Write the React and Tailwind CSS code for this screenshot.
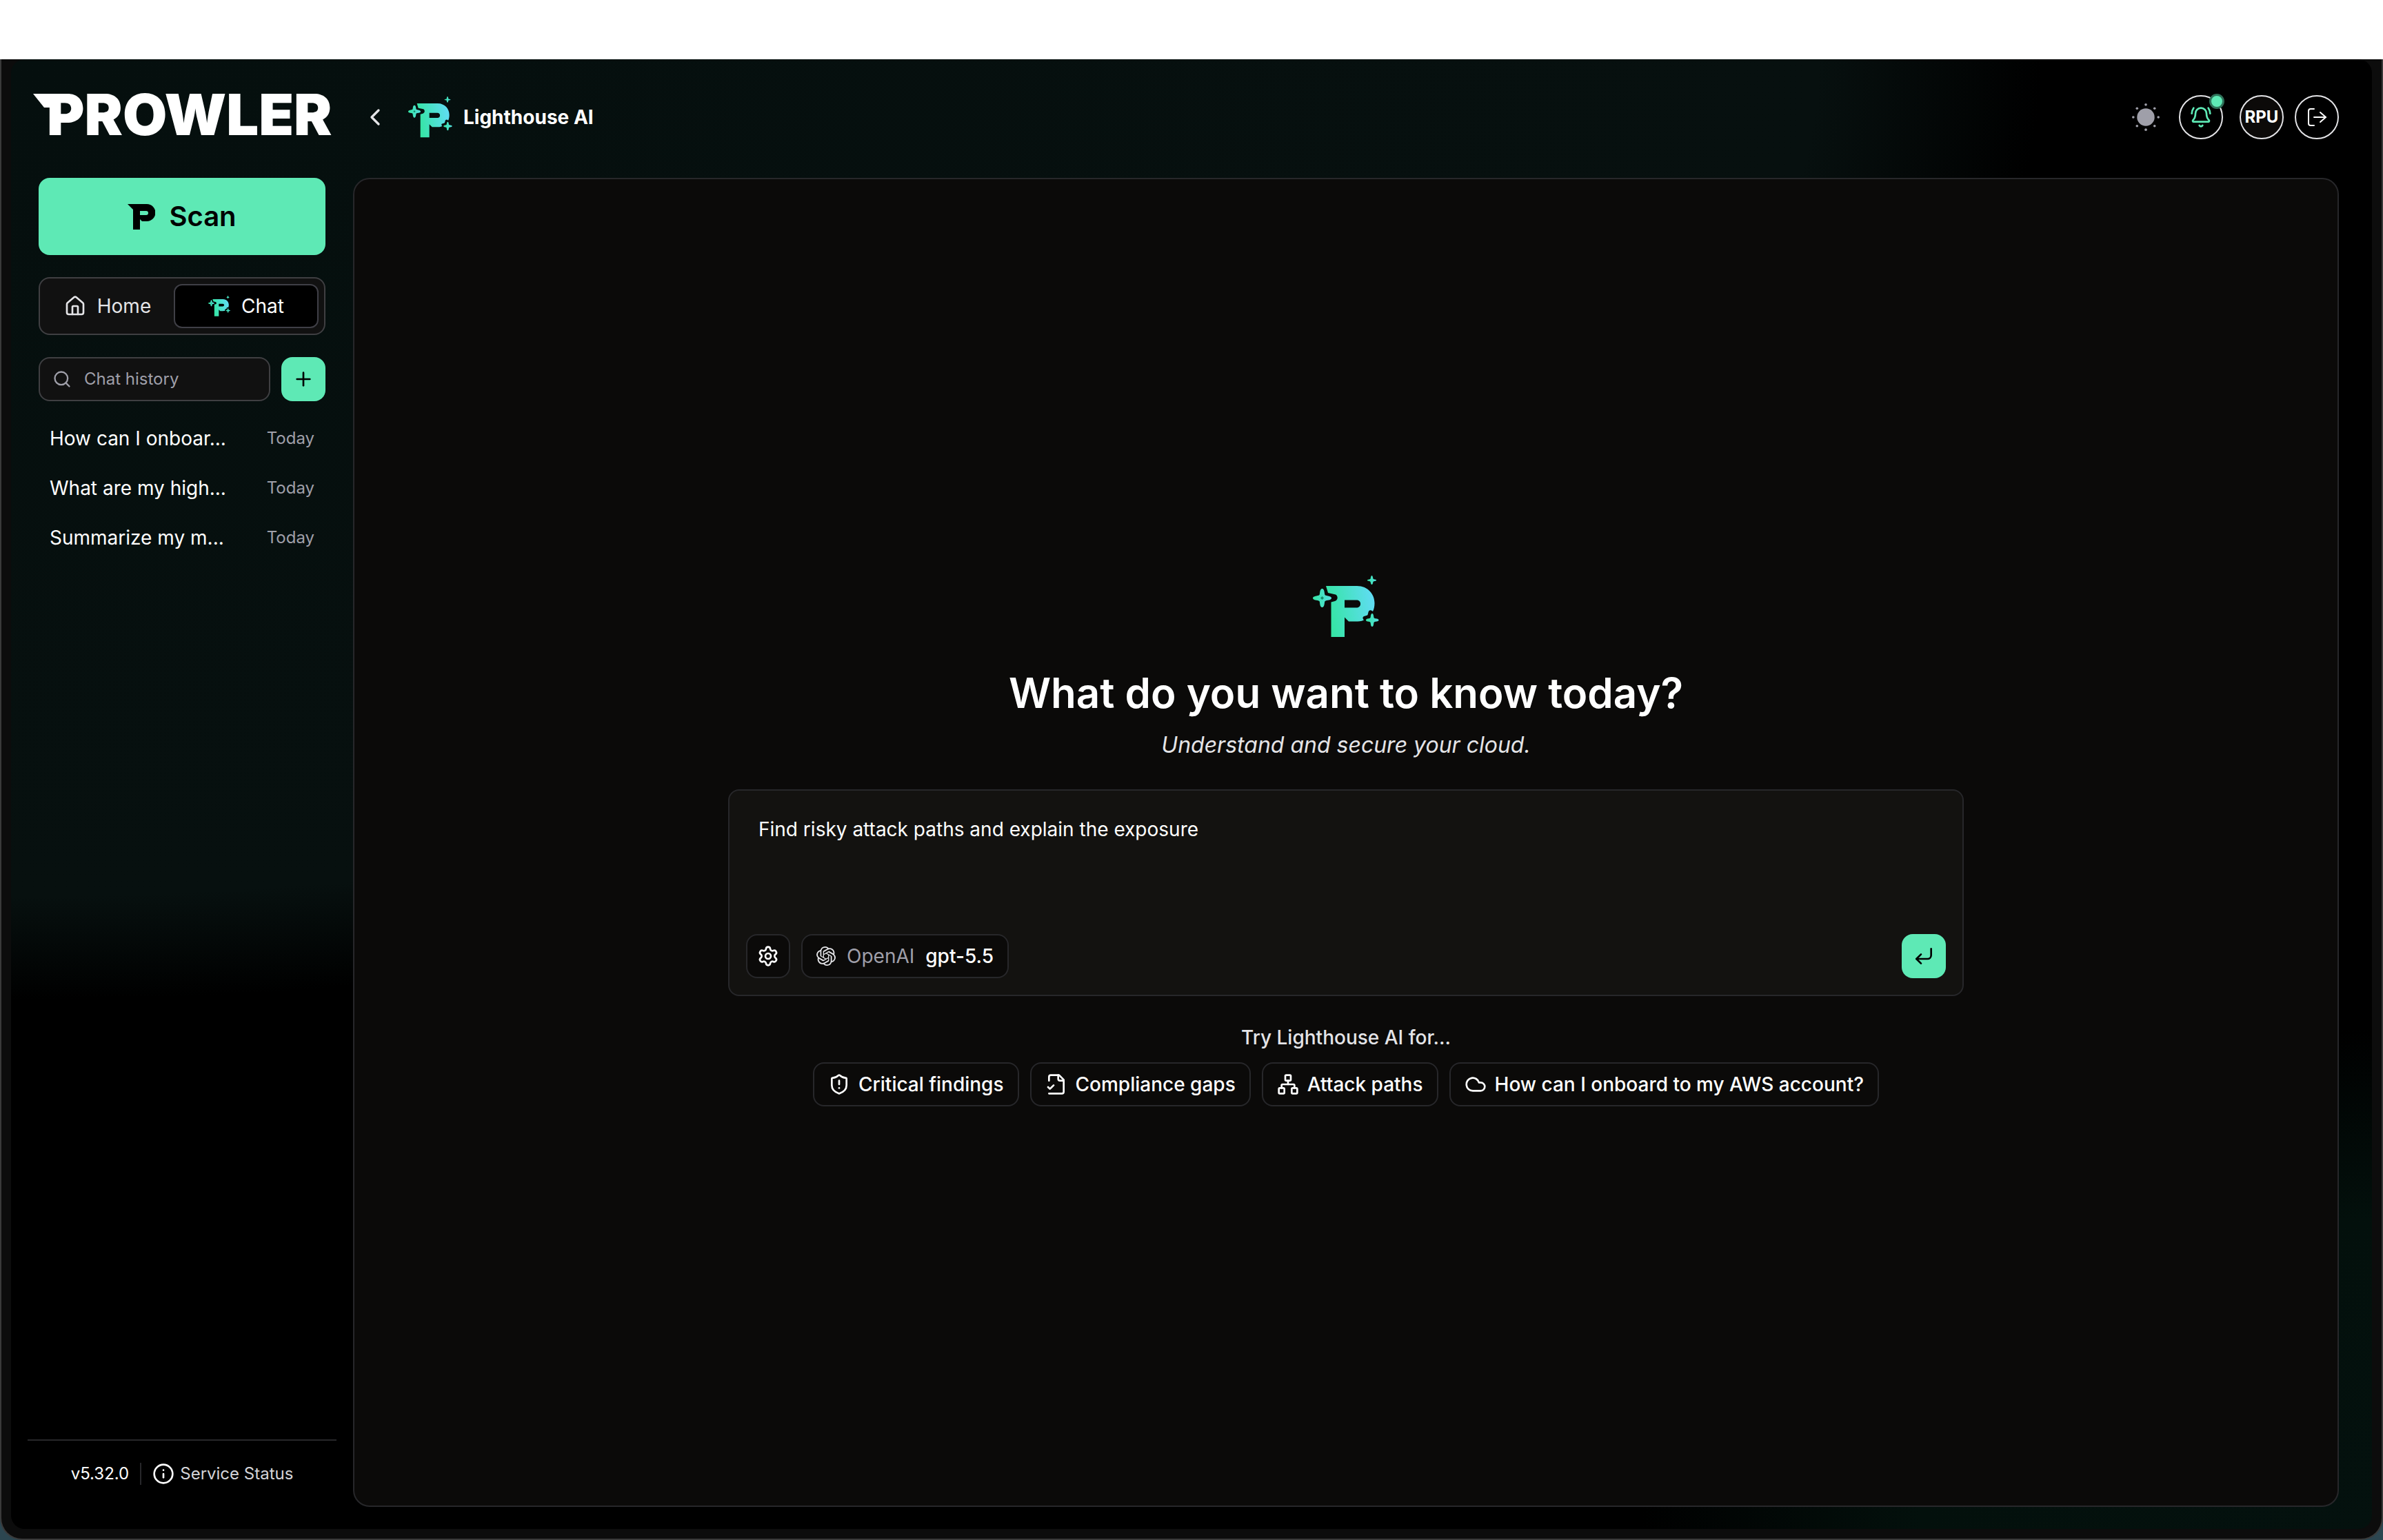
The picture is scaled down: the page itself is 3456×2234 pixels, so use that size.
import { useState } from "react";
import {
  BellRing,
  ChevronLeft,
  Cloud,
  CornerDownLeft,
  House,
  Info,
  Network,
  Plus,
  Search,
  Settings,
  ShieldAlert,
} from "lucide-react";
import { SiOpenai } from "react-icons/si";

const chats = [
  { id: 1, title: "How can I onboar...", date: "Today" },
  { id: 2, title: "What are my high...", date: "Today" },
  { id: 3, title: "Summarize my m...", date: "Today" },
];

const FileCheckIcon = ({ className }) => (
  <svg
    viewBox="0 0 24 24"
    fill="none"
    stroke="currentColor"
    strokeWidth="2"
    strokeLinecap="round"
    strokeLinejoin="round"
    className={className}
    aria-hidden="true"
  >
    <path d="M4 22h14a2 2 0 0 0 2-2V7l-5-5H6a2 2 0 0 0-2 2v4" />
    <path d="M14 2v4a2 2 0 0 0 2 2h4" />
    <path d="m3 15 2 2 4-4" />
  </svg>
);

const SignOutIcon = ({ className }) => (
  <svg
    viewBox="0 0 32 32"
    fill="none"
    stroke="currentColor"
    strokeWidth="2"
    strokeLinecap="round"
    strokeLinejoin="round"
    className={className}
    aria-hidden="true"
  >
    <path d="M12 4H7a3 3 0 0 0-3 3v18a3 3 0 0 0 3 3h5" />
    <path d="M12 16h17" />
    <path d="m21 9 8 7-8 7" />
  </svg>
);

const SunIcon = ({ className }) => (
  <svg viewBox="0 0 44 44" fill="currentColor" className={className} aria-hidden="true">
    <circle cx="22" cy="22" r="14" />
    <circle cx="22" cy="2" r="2" />
    <circle cx="22" cy="42" r="2" />
    <circle cx="2" cy="22" r="2" />
    <circle cx="42" cy="22" r="2" />
    <circle cx="8" cy="8" r="2" />
    <circle cx="36" cy="8" r="2" />
    <circle cx="8" cy="36" r="2" />
    <circle cx="36" cy="36" r="2" />
  </svg>
);

// Brand mark, plain version used on the scan button
const ProwlerMark = ({ className }) => (
  <svg viewBox="0 0 40 37" fill="currentColor" className={className} aria-hidden="true">
    <path
      fillRule="evenodd"
      d="M0 0h28a12.500 12.500 0 0 1 0 25h-7l-3-3v15H8V8Zm18 10v6h9a3 3 0 0 0 0-6Z"
    />
  </svg>
);

// Brand mark with sparkles
const LighthouseMark = ({ id, className }) => (
  <svg viewBox="0 0 96 90" className={className} aria-hidden="true">
    <defs>
      <linearGradient id={id} gradientUnits="userSpaceOnUse" x1="22" y1="50" x2="90" y2="38">
        <stop offset="0" stopColor="#35e5a4" />
        <stop offset="1" stopColor="#61dcf4" />
      </linearGradient>
      <linearGradient id={`${id}-star`} x1="0" y1="0" x2="1" y2="0">
        <stop offset="0" stopColor="#35e5a4" />
        <stop offset="1" stopColor="#55dfe0" />
      </linearGradient>
    </defs>
    <path
      fill={`url(#${id})`}
      fillRule="evenodd"
      d="M19 15H64C80 15 89.500 27 89.500 40C89.500 45 88.500 49 87 52C84 49 81 50 80.500 53L79.500 57C77 59 72 58 72.500 62C73 64 74 64 74 64.500C70 66.500 66 66.500 62 66.500H52L46 60.500V89H26.500V38.500L32 37C37 35.500 36.500 29 33 27.500L22 25ZM46 35.500V46.500H63.500C71 46.500 71 35.500 63.500 35.500Z"
    />
    <g fill={`url(#${id}-star)`}>
      <path d="M13.500 19C15.500 19 16.500 21 17 26C17 28 18 29 20 29C25 30 27 31 27 32.500C27 34.500 25 35.500 20 36C18 36.500 17 37 17 39C16.500 44 15.500 46 13.500 46C11.500 46 10.500 44 10 39C10 37 9 36.500 7 36C2 35.500 0 34.500 0 32.500C0 31 2 30 7 29C9 29 10 28 10 26C10.500 21 11.500 19 13.500 19Z" />
      <path d="M86 55C87.500 55 88 57 88.300 60C88.500 61.500 89 62 91 62.200C94 62.700 95.500 63 95.500 64.500C95.500 66 94 66.300 91 66.700C89 67 88.500 67.500 88.300 69C88 72 87.500 74 86 74C84.500 74 84 72 83.700 69C83.500 67.500 83 67 81 66.700C78 66.300 77 66 77 64.500C77 63 78 62.700 81 62.200C83 62 83.500 61.500 83.700 60C84 57 84.500 55 86 55Z" />
      <path d="M85.500 0C86.500 0 87 2 87.300 4C87.500 5 88 5.300 89.500 5.500C91.500 5.800 92 6 92 6.700C92 7.500 91.500 7.700 89.500 8C88 8.300 87.500 8.500 87.300 9.500C87 11.500 86.500 13 85.500 13C84.500 13 84 11.500 83.700 9.500C83.500 8.500 83 8.300 81.500 8C79.500 7.700 79 7.500 79 6.700C79 6 79.500 5.800 81.500 5.500C83 5.300 83.500 5 83.700 4C84 2 84.500 0 85.500 0Z" />
    </g>
    <path d="m13.500 30 2.500 2.500-2.500 2.500-2.500-2.500Z" fill="#178a68" />
  </svg>
);

const suggestions = [
  { label: "Critical findings", icon: ShieldAlert },
  { label: "Compliance gaps", icon: FileCheckIcon },
  { label: "Attack paths", icon: Network },
  { label: "How can I onboard to my AWS account?", icon: Cloud },
];

const Sidebar = () => {
  const [search, setSearch] = useState("");

  return (
    <aside className="flex w-[496px] shrink-0 flex-col">
      <div className="flex h-[172px] items-center px-8 pb-3">
        <a href="#home" className="flex items-center">
          <svg viewBox="0 0 24 60" className="-mr-1 h-[60px] w-6 text-white" aria-hidden="true">
            <path d="M0 0h24v20h-8Z" fill="currentColor" />
          </svg>
          <span className="text-[83px] leading-none font-black text-white">PROWLER</span>
        </a>
      </div>

      <div className="flex flex-1 flex-col px-10">
        <button
          type="button"
          className="flex h-28 items-center justify-center gap-5 rounded-2xl bg-emerald-300 text-[40px] font-semibold text-black"
        >
          <ProwlerMark className="h-[37px] w-10" />
          Scan
        </button>

        <nav className="mt-8 grid h-[84px] grid-cols-[6fr_7fr] gap-1.5 rounded-2xl border-2 border-[#3f3f42] bg-[#111111] p-2 text-[28px]">
          <a href="#home" className="flex items-center justify-center gap-4 text-zinc-200">
            <House className="size-8" />
            Home
          </a>
          <a
            href="#chat"
            className="flex items-center justify-center gap-4 rounded-xl border-2 border-[#3f3f46] bg-black text-white"
          >
            <LighthouseMark id="mark-tab" className="h-[30px] w-8" />
            Chat
          </a>
        </nav>

        <div className="mt-8 flex gap-4">
          <label className="flex h-16 min-w-0 flex-1 items-center gap-[18px] rounded-2xl border-2 border-[#3f3f42] bg-[#111111] px-[18px] text-zinc-400">
            <Search className="size-7 shrink-0" />
            <input
              type="text"
              aria-label="Chat history"
              placeholder="Chat history"
              value={search}
              onChange={(e) => setSearch(e.target.value)}
              className="w-full min-w-0 bg-transparent text-2xl text-white outline-none placeholder:text-zinc-400"
            />
          </label>
          <button
            type="button"
            aria-label="New chat"
            className="flex size-16 items-center justify-center rounded-2xl bg-emerald-300 text-black"
          >
            <Plus className="size-8" />
          </button>
        </div>

        <ul className="mt-[22px] flex flex-col gap-2">
          {chats.map((chat) => (
            <li key={chat.id}>
              <a href="#chat" className="flex h-16 items-center justify-between px-4">
                <span className="truncate text-[28px] text-white">{chat.title}</span>
                <span className="text-2xl text-zinc-400">{chat.date}</span>
              </a>
            </li>
          ))}
        </ul>
      </div>

      <footer className="mx-6 flex h-[130px] items-start justify-center border-t-2 border-zinc-800 pt-8 text-2xl">
        <div className="flex items-center gap-4">
          <span className="text-white">v5.32.0</span>
          <span className="h-8 w-0.5 bg-zinc-800" />
          <a href="#status" className="flex items-center gap-2 text-zinc-300">
            <Info className="size-8 text-white" />
            Service Status
          </a>
        </div>
      </footer>
    </aside>
  );
};

const Header = () => (
  <header className="flex h-[172px] items-center justify-between pb-1">
    <div className="flex items-center pl-3">
      <button type="button" aria-label="Back" className="text-zinc-200">
        <ChevronLeft className="size-10" />
      </button>
      <LighthouseMark id="mark-header" className="ml-7 h-[60px] w-16" />
      <h1 className="ml-4 text-[28px] font-bold text-white">Lighthouse AI</h1>
    </div>

    <div className="flex items-center">
      <button type="button" aria-label="Toggle theme" className="mr-7 text-zinc-400">
        <SunIcon className="size-10" />
      </button>
      <button
        type="button"
        aria-label="Updates"
        className="relative mr-6 flex size-16 items-center justify-center rounded-full border-2 border-zinc-200 text-emerald-300"
      >
        <BellRing className="size-8" />
        <span className="absolute -top-1 -right-1 size-[22px] rounded-full border-[3px] border-[#2f7159] bg-emerald-300" />
      </button>
      <button
        type="button"
        className="mr-4 flex size-16 items-center justify-center rounded-full border-2 border-zinc-200 bg-[#0c0a09] text-2xl font-bold text-white"
      >
        RPU
      </button>
      <button
        type="button"
        aria-label="Sign out"
        className="flex size-16 items-center justify-center rounded-full border-2 border-zinc-200 text-white"
      >
        <SignOutIcon className="size-8" />
      </button>
    </div>
  </header>
);

const PromptBox = () => {
  const [prompt, setPrompt] = useState("Find risky attack paths and explain the exposure");

  return (
    <form
      onSubmit={(e) => e.preventDefault()}
      className="w-full max-w-[1792px] rounded-2xl border-2 border-zinc-800 bg-[#131210] p-6"
    >
      <textarea
        aria-label="Message"
        value={prompt}
        onChange={(e) => setPrompt(e.target.value)}
        className="block h-[168px] w-full resize-none bg-transparent px-[18px] pt-3 text-[28px] leading-10 text-white outline-none"
      />
      <div className="mt-4 flex items-center gap-4">
        <button
          type="button"
          aria-label="Settings"
          className="flex size-16 items-center justify-center rounded-2xl border-2 border-zinc-800 bg-[#0b0a09] text-white"
        >
          <Settings className="size-8" />
        </button>
        <button
          type="button"
          className="flex h-16 items-center gap-4 rounded-2xl border-2 border-zinc-800 bg-[#0b0a09] px-5 text-[28px]"
        >
          <SiOpenai className="size-7 text-zinc-200" />
          <span className="text-zinc-400">OpenAI</span>
          <span className="font-medium text-white">gpt-5.5</span>
        </button>
        <button
          type="submit"
          aria-label="Send"
          className="ml-auto flex size-16 items-center justify-center rounded-2xl bg-emerald-300 text-black"
        >
          <CornerDownLeft className="size-8" />
        </button>
      </div>
    </form>
  );
};

const App = () => {
  return (
    <div className="flex min-h-screen flex-col bg-[#2c4650] font-['Inter',sans-serif]">
      <div className="h-[86px] bg-white" />
      <div className="flex flex-1 rounded-b-[32px] border-2 border-t-0 border-[#3a3a3a] bg-[#0c0c0c] px-3.5 pb-3.5">
        <div className="flex flex-1 rounded-[20px] bg-black bg-[radial-gradient(86%_64%_at_0%_0%,#050f0e_0%,#07100f_89%,transparent_100%),radial-gradient(31%_34%_at_100%_100%,#04110e_0%,#03100c_62%,transparent_100%)]">
          <Sidebar />

          <div className="flex flex-1 flex-col pr-12 pb-8">
            <Header />
            <main className="flex flex-1 flex-col items-center justify-center rounded-3xl border-2 border-zinc-800 bg-[#0b0a09] pb-1">
              <LighthouseMark id="mark-hero" className="h-[90px] w-24" />
              <h2 className="mt-11 text-[60px] leading-[72px] font-semibold text-white">
                What do you want to know today?
              </h2>
              <p className="mt-4 text-[32px] leading-[48px] text-zinc-200 italic">
                Understand and secure your cloud.
              </p>
              <div className="mt-10 flex w-full justify-center">
                <PromptBox />
              </div>
              <p className="mt-10 text-[28px] leading-10 font-medium text-zinc-200">
                Try Lighthouse AI for...
              </p>
              <div className="mt-4 flex gap-4">
                {suggestions.map(({ label, icon: Icon }) => (
                  <button
                    key={label}
                    type="button"
                    className="flex h-16 items-center gap-3 rounded-2xl border-2 border-zinc-800 px-5 text-[28px] font-medium text-white"
                  >
                    <Icon className="size-8" />
                    {label}
                  </button>
                ))}
              </div>
            </main>
          </div>
        </div>
      </div>
    </div>
  );
};

export default App;
